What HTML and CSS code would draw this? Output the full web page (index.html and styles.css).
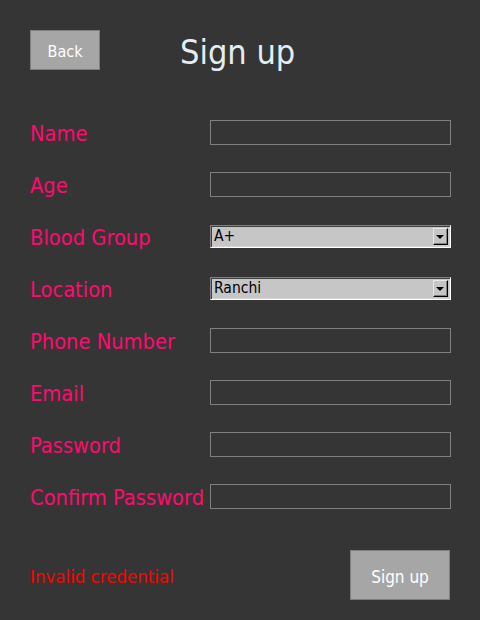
FILE: index.html
```html
<!DOCTYPE html>
<html>
<head>
<meta charset="utf-8">
<link rel="stylesheet" href="styles.css">
</head>
<body>
<div class="page">
  <header class="header">
    <button class="btn btn-back">Back</button>
    <h1 class="title">Sign up</h1>
  </header>
  <form class="form">
    <div class="row"><label class="label">Name</label><div class="input"></div></div>
    <div class="row"><label class="label">Age</label><div class="input"></div></div>
    <div class="row"><label class="label">Blood Group</label><div class="select"><span class="select-text">A+</span><span class="arrow"><span class="tri"></span></span></div></div>
    <div class="row"><label class="label">Location</label><div class="select"><span class="select-text">Ranchi</span><span class="arrow"><span class="tri"></span></span></div></div>
    <div class="row"><label class="label">Phone Number</label><div class="input"></div></div>
    <div class="row"><label class="label">Email</label><div class="input"></div></div>
    <div class="row"><label class="label">Password</label><div class="input"></div></div>
    <div class="row"><label class="label">Confirm Password</label><div class="input"></div></div>
  </form>
  <footer class="footer">
    <span class="error">Invalid credential</span>
    <button class="btn btn-signup">Sign up</button>
  </footer>
</div>
</body>
</html>
```
FILE: styles.css
```css
html, body {
  margin: 0;
  padding: 0;
  background: #353535;
}
body {
  width: 480px;
  height: 620px;
  overflow: hidden;
  font-family: "DejaVu Sans Condensed", "DejaVu Sans", sans-serif;
  font-stretch: condensed;
}
.page {
  padding: 30px 29px 0 30px;
}
.header {
  display: flex;
  align-items: center;
  height: 40px;
}
.btn {
  font-family: inherit;
  font-stretch: condensed;
  background: #a6a6a6;
  border: 1px solid #7e7e7e;
  color: #ffffff;
  padding: 0;
  margin: 0;
}
.btn-back {
  width: 70px;
  height: 40px;
  font-size: 16px;
  padding-top: 2px;
}
.title {
  margin: 3px 0 0 80px;
  font-weight: normal;
  font-size: 34px;
  color: #e4ecf4;
  line-height: 40px;
}
.form {
  margin-top: 50px;
  display: flex;
  flex-direction: column;
  gap: 27px;
}
.row {
  display: flex;
  align-items: center;
  height: 25px;
}
.label {
  width: 180px;
  flex: none;
  font-size: 21.7px;
  color: #ff0a6e;
  line-height: 25px;
  margin-top: 2px;
  white-space: nowrap;
}
.input {
  box-sizing: border-box;
  width: 241px;
  height: 25px;
  border: 1px solid #808080;
}
.select {
  box-sizing: border-box;
  width: 241px;
  height: 23px;
  background: #c6c6c6;
  border-style: solid;
  border-width: 1px;
  border-color: #808080 #ffffff #ffffff #808080;
  box-shadow: inset 1px 1px 0 #404040, inset -1px -1px 0 #d4d4d4;
  display: flex;
  align-items: center;
  justify-content: space-between;
  padding: 0 2px 0 2px;
}
.select-text {
  font-size: 15.5px;
  color: #000;
  line-height: 19px;
  padding-left: 1px;
}
.arrow {
  box-sizing: border-box;
  width: 15px;
  height: 17px;
  background: #c6c6c6;
  border-style: solid;
  border-width: 1px;
  border-color: #e8e8e8 #000000 #000000 #e8e8e8;
  box-shadow: inset -1px -1px 0 #808080;
  display: flex;
  align-items: center;
  justify-content: center;
}
.tri {
  width: 0;
  height: 0;
  border-left: 4px solid transparent;
  border-right: 4px solid transparent;
  border-top: 4px solid #000;
  margin-right: 1px;
}
.footer {
  margin-top: 41px;
  display: flex;
  align-items: center;
  justify-content: space-between;
}
.error {
  color: #ff0000;
  font-size: 18.5px;
  margin-top: 2px;
}
.btn-signup {
  width: 100px;
  height: 50px;
  font-size: 17px;
  padding-top: 3px;
  margin-right: 1px;
}
```
